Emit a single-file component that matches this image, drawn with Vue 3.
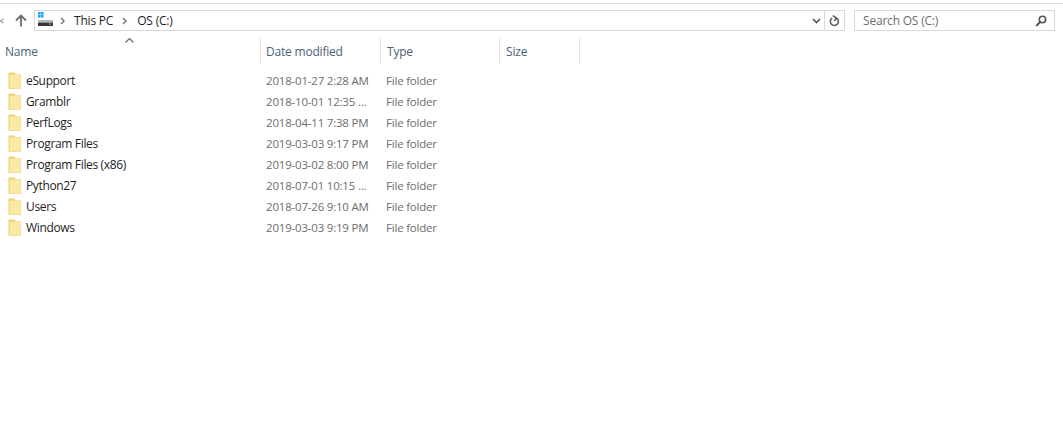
<script setup>
const rows = [
  ['eSupport', '2018-01-27 2:28 AM'],
  ['Gramblr', '2018-10-01 12:35 ...'],
  ['PerfLogs', '2018-04-11 7:38 PM'],
  ['Program Files', '2019-03-03 9:17 PM'],
  ['Program Files (x86)', '2019-03-02 8:00 PM'],
  ['Python27', '2018-07-01 10:15 ...'],
  ['Users', '2018-07-26 9:10 AM'],
  ['Windows', '2019-03-03 9:19 PM'],
]
</script>

<template>
  <div class="window">
    <div class="topline"></div>
    <div class="navbar">
      <svg class="back" width="4" height="10" viewBox="0 0 4 10"><path d="M3.5 3 .5 5l3 2" fill="none" stroke="#a0a0a0" stroke-width="1.3"/></svg>
      <svg class="up" width="12" height="13" viewBox="0 0 12 13"><path d="M6 12.5V1.5M1 6.5l5-5 5 5" fill="none" stroke="#6d6d6d" stroke-width="1.8"/></svg>
      <div class="address">
        <svg class="drive" width="16" height="15" viewBox="0 0 16 15">
          <rect x="1" y="0" width="2.6" height="2.6" fill="#1fa5ee"/><rect x="4" y="0" width="2.6" height="2.6" fill="#1fa5ee"/>
          <rect x="1" y="3" width="2.6" height="2.6" fill="#1fa5ee"/><rect x="4" y="3" width="2.6" height="2.6" fill="#1fa5ee"/>
          <rect x="1" y="8" width="15" height="2.5" fill="#b4babd"/><rect x="1" y="10.5" width="15" height="3.5" fill="#33393d"/>
          <rect x="12" y="11.5" width="2" height="1" fill="#9fd27a"/>
        </svg>
        <svg class="chev first" width="5" height="8" viewBox="0 0 5 8"><path d="M1 1l3 3-3 3" fill="none" stroke="#707070" stroke-width="1.4"/></svg>
        <span class="crumb">This PC</span>
        <svg class="chev" width="5" height="8" viewBox="0 0 5 8"><path d="M1 1l3 3-3 3" fill="none" stroke="#707070" stroke-width="1.4"/></svg>
        <span class="crumb">OS (C:)</span>
        <svg class="drop" width="9" height="6" viewBox="0 0 9 6"><path d="M1 1l3.5 3.5L8 1" fill="none" stroke="#555" stroke-width="1.7"/></svg>
        <div class="refresh">
          <svg width="11" height="12" viewBox="0 0 11 12"><path d="M7.4 3A4 4 0 1 1 3 3.2M3.8 .6 7.4 3 5.4 6" fill="none" stroke="#5f5f5f" stroke-width="1.6"/></svg>
        </div>
      </div>
      <div class="search">
        <span>Search OS (C:)</span>
        <svg width="12" height="12" viewBox="0 0 12 12"><circle cx="7.5" cy="4.5" r="3.2" fill="none" stroke="#555" stroke-width="1.6"/><path d="M5.2 7 1.2 11" stroke="#555" stroke-width="1.9"/></svg>
      </div>
    </div>
    <div class="header">
      <svg class="sort" width="9" height="5" viewBox="0 0 9 5"><path d="M.5 4.5l4-4 4 4" fill="none" stroke="#6a6a6a" stroke-width="1.2"/></svg>
      <div class="h name">Name</div>
      <div class="h date">Date modified</div>
      <div class="h type">Type</div>
      <div class="h size">Size</div>
    </div>
    <div class="list">
      <div v-for="r in rows" :key="r[0]" class="row">
        <div class="cell name">
          <svg class="folder" width="13" height="17" viewBox="0 0 13 17">
            <path d="M.5 .5h6l1 1.5v14.5h-7z" fill="#f0d27a"/>
            <rect x="1.5" y="2.5" width="11.2" height="14.2" fill="#fce9a4" stroke="#efd583" stroke-width=".6"/>
          </svg>
          <span class="fname">{{ r[0] }}</span>
        </div>
        <div class="cell date muted">{{ r[1] }}</div>
        <div class="cell type muted">File folder</div>
      </div>
    </div>
  </div>
</template>

<style scoped>
.window {
  width: 1063px;
  height: 444px;
  background: #fff;
  overflow: hidden;
  font-family: "Open Sans", "Noto Sans", sans-serif;
  font-size: 11.5px;
  letter-spacing: -0.2px;
  color: #1e1e1e;
}
.topline {
  height: 1px;
  margin-top: 3px;
  background: #dfdfdf;
}
.navbar {
  display: flex;
  align-items: center;
  height: 21px;
  margin-top: 6px;
}
.up { margin-left: 11px; margin-right: 7px; }
.address {
  width: 811px;
  height: 21px;
  box-sizing: border-box;
  border: 1px solid #d9d9d9;
  display: flex;
  align-items: center;
  padding-left: 2px;
}
.drive { margin-top: -3px; }
.chev { margin: 0 10px 0 9px; }
.chev.first { margin-left: 7px; margin-right: 9px; }
.crumb { font-size: 12px; letter-spacing: -0.2px; }
.drop { margin-left: auto; margin-right: 3px; }
.refresh {
  width: 20px;
  height: 19px;
  box-sizing: border-box;
  border-left: 1px solid #d9d9d9;
  display: flex;
  align-items: center;
  justify-content: center;
}
.search {
  width: 201px;
  height: 21px;
  box-sizing: border-box;
  margin-left: 9px;
  border: 1px solid #d9d9d9;
  display: flex;
  align-items: center;
  justify-content: space-between;
  padding: 0 7px 0 8px;
  color: #6d6d6d;
  font-size: 12px;
}
.header {
  position: relative;
  display: flex;
  height: 26px;
  margin-top: 7px;
  color: #4c607a;
}
.sort {
  position: absolute;
  left: 125px;
  top: 0;
}
.h {
  box-sizing: border-box;
  display: flex;
  align-items: center;
  border-right: 1px solid #e5e5e5;
  font-size: 12px;
}
.h.name { width: 261px; padding-left: 5px; }
.h.date { width: 120px; padding-left: 5px; }
.h.type { width: 119px; padding-left: 6px; }
.h.size { width: 80px; padding-left: 6px; }
.list { margin-top: 6px; }
.row { display: flex; height: 21px; align-items: center; }
.cell { box-sizing: border-box; white-space: nowrap; }
.cell.name { width: 261px; padding-left: 8px; display: flex; align-items: center; }
.cell.date { width: 120px; padding-left: 5px; }
.cell.type { width: 119px; padding-left: 5px; }
.fname { margin-left: 5px; font-size: 12px; letter-spacing: -0.35px; }
.muted { color: #6d6d6d; }
</style>
